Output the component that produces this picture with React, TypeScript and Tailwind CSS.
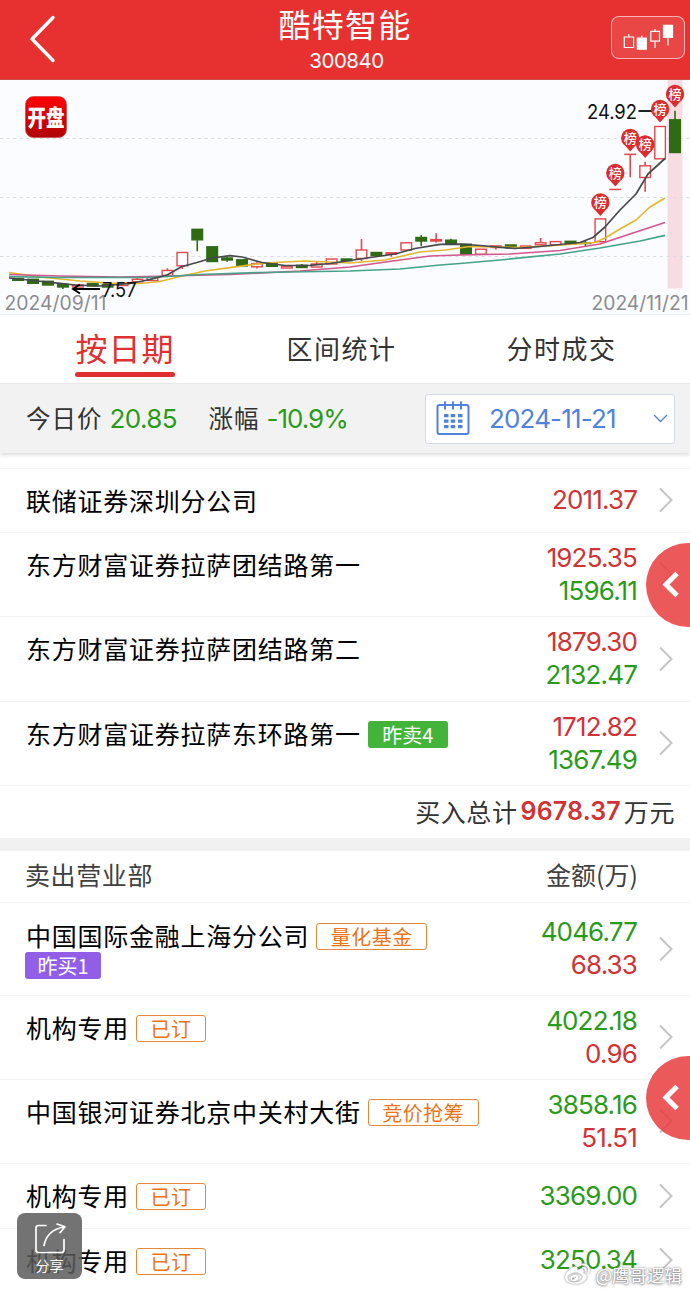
import { FaWeibo } from "react-icons/fa";

const NUM = "font-['Inter','Noto_Sans_CJK_SC',sans-serif]";

type Candle = {
  // body top / bottom
  t: number;
  b: number;
  up: boolean;
  // wick top / bottom
  wt?: number;
  wb?: number;
};

const candles: Candle[] = [
  { t: 278.5, b: 280.3, up: false },
  { t: 279.3, b: 283.3, up: false },
  { t: 281.3, b: 285, up: false },
  { t: 284.3, b: 287, up: false, wb: 289 },
  { t: 285, b: 287, up: true },
  { t: 283.5, b: 286, up: false },
  { t: 284.5, b: 287, up: false },
  { t: 283, b: 285.5, up: true },
  { t: 279.3, b: 281.8, up: true, wt: 277.5 },
  { t: 277.5, b: 280.5, up: true, wt: 276 },
  { t: 270.5, b: 275.5, up: true, wt: 268.3, wb: 277.3 },
  { t: 252.5, b: 265.8, up: true, wb: 269 },
  { t: 229.3, b: 239.8, up: false, wb: 251.3 },
  { t: 246.8, b: 261.5, up: false },
  { t: 258, b: 260, up: false, wt: 256.7, wb: 261.7 },
  { t: 259.8, b: 266, up: false, wb: 267 },
  { t: 263.6, b: 266.8, up: true, wt: 262, wb: 268.5 },
  { t: 263, b: 266.3, up: false, wt: 262 },
  { t: 266.2, b: 268, up: true },
  { t: 265.3, b: 267.5, up: false, wt: 264 },
  { t: 264, b: 267, up: true, wt: 261.3 },
  { t: 259, b: 264, up: true },
  { t: 259, b: 260.7, up: false },
  { t: 250, b: 258.5, up: true, wt: 239, wb: 261.3 },
  { t: 252.5, b: 255.5, up: false },
  { t: 252.8, b: 254.2, up: true, wb: 256.7 },
  { t: 242.8, b: 250, up: true },
  { t: 237.5, b: 241, up: false, wt: 235, wb: 246 },
  { t: 239.6, b: 241, up: true, wt: 233.3, wb: 242.7 },
  { t: 240.2, b: 243.5, up: false, wt: 238.7 },
  { t: 244.2, b: 254.2, up: false },
  { t: 249.2, b: 254.2, up: true },
  { t: 246, b: 247.5, up: true, wb: 249.5 },
  { t: 245, b: 247.7, up: false },
  { t: 246, b: 248.3, up: true },
  { t: 242.8, b: 244.8, up: true, wt: 238 },
  { t: 241.6, b: 244.8, up: true },
  { t: 241.3, b: 244, up: false },
  { t: 243, b: 243.5, up: false, wt: 240.7, wb: 247 },
  { t: 218.9, b: 241.7, up: true },
  { t: 189.4, b: 189.5, up: true },
  { t: 154.3, b: 154.4, up: true, wb: 177.3 },
  { t: 165.8, b: 177.5, up: true, wt: 161.7, wb: 191.7 },
  { t: 126.5, b: 158.8, up: true },
  { t: 119.8, b: 152.5, up: false, wt: 110.7 },
];

const candleX = (i: number) => 18.1 + i * 14.93;

const pins = [
  { i: 39, y: 203 },
  { i: 40, y: 173.5 },
  { i: 41, y: 138.5 },
  { i: 42, y: 145 },
  { i: 43, y: 109.5 },
  { i: 44, y: 94.5 },
];

const averages = [
  {
    color: "#e3b72f",
    points: [9, 272.5, 40, 277, 80, 281, 110, 283.2, 140, 283.5, 160, 281.5, 182, 276, 205, 271, 230, 267.7, 265, 263, 305, 261, 350, 263, 385, 260, 420, 252, 445, 250, 470, 246.5, 520, 247.5, 570, 244.5, 595, 242.5, 605, 238, 620, 229, 636, 220, 650, 207, 665, 198],
  },
  {
    color: "#d2578f",
    points: [9, 274.5, 60, 276, 120, 277, 170, 276, 230, 274.5, 300, 271, 350, 267, 400, 260, 430, 256, 460, 255, 510, 254, 560, 250.5, 600, 244, 630, 234, 665, 222.5],
  },
  {
    color: "#45a389",
    points: [9, 276.7, 60, 277.5, 150, 277.5, 200, 274.5, 260, 272.5, 350, 271, 400, 269, 440, 265, 460, 263.5, 500, 260, 560, 254, 600, 248, 640, 241, 665, 235.3],
  },
  {
    color: "#45484c",
    points: [9, 278, 33, 280.5, 60, 283.3, 75, 285, 100, 286, 130, 283.5, 150, 279.5, 167, 275, 182, 266.5, 197, 262.5, 212, 258, 230, 255.7, 242, 257, 262, 262.5, 285, 265.5, 310, 265.3, 330, 263.5, 360, 259, 395, 254, 415, 248.5, 440, 244.3, 460, 244.2, 480, 245.5, 515, 248.5, 540, 246.5, 560, 244.5, 580, 242.5, 593, 237.5, 605, 227, 620, 210, 636, 194, 648, 174, 665, 158.5],
  },
];

function KLineChart() {
  return (
    <svg className="block h-[235px] w-full bg-[#fbfcff]" viewBox="0 80 690 235">
      <rect x="667.5" y="80" width="15" height="208.5" fill="#f7dde3" />
      {[138.5, 197.5, 256.5].map((y) => (
        <line key={y} x1="0" x2="690" y1={y} y2={y} stroke="#d9dce4" strokeDasharray="3 3.6" />
      ))}
      <line x1="0" x2="690" y1="314.5" y2="314.5" stroke="#eceef2" />

      <text x="4.5" y="310" fontSize="19.5" fill="#8b8c8f" textLength="102" lengthAdjust="spacingAndGlyphs">
        2024/09/11
      </text>
      <text x="591.5" y="310" fontSize="19.5" fill="#8b8c8f" textLength="97" lengthAdjust="spacingAndGlyphs">
        2024/11/21
      </text>

      {candles.map((c, i) => {
        const x = candleX(i);
        const color = c.up ? "#e2474b" : "#2f6a14";
        return (
          <g key={i} stroke={color} strokeWidth="1.4">
            {c.wt !== undefined && <line x1={x} x2={x} y1={c.wt} y2={c.t} strokeWidth="1.6" />}
            {c.wb !== undefined && <line x1={x} x2={x} y1={c.b} y2={c.wb} strokeWidth="1.6" />}
            <rect x={x - 5.3} y={c.t} width="10.6" height={c.b - c.t} fill={c.up ? "#fff" : color} />
          </g>
        );
      })}

      {averages.map((a) => (
        <polyline key={a.color} points={a.points.join(" ")} fill="none" stroke={a.color} strokeWidth="1.7" strokeLinejoin="round" />
      ))}

      {/* low / high labels */}
      <path d="M100 289H73M80 284.5L73 289l7 4.5" fill="none" stroke="#000" strokeWidth="1.9" />
      <text x="102" y="297" fontSize="19.5" fill="#111" textLength="34.5" lengthAdjust="spacingAndGlyphs">
        7.57
      </text>
      <text x="587" y="118.5" fontSize="20" fill="#111" textLength="50" lengthAdjust="spacingAndGlyphs">
        24.92
      </text>
      <path d="M638.5 111h14" stroke="#222" strokeWidth="2" />

      {pins.map((p) => {
        const x = candleX(p.i);
        return (
          <g key={p.i}>
            <path d={`M${x - 7} ${p.y + 5}L${x} ${p.y + 13}L${x + 7} ${p.y + 5}Z`} fill="#dd2c2f" />
            <circle cx={x} cy={p.y - 0.5} r="9.2" fill="#dd2c2f" />
            <text x={x} y={p.y + 4.2} textAnchor="middle" fontSize="13" fontWeight="500" fill="#fff">
              榜
            </text>
          </g>
        );
      })}

      <defs>
        <linearGradient id="badge" x1="0" y1="0" x2="0" y2="1">
          <stop offset="0" stopColor="#fd0303" />
          <stop offset="1" stopColor="#ae0507" />
        </linearGradient>
      </defs>
      <rect x="25.5" y="96.5" width="41" height="41" rx="8" fill="url(#badge)" stroke="#cf4a4a" strokeWidth="0.8" />
      <text x="27.5" y="125.5" fontSize="23" fontWeight="900" fill="#fff" textLength="37" lengthAdjust="spacingAndGlyphs" className="font-['Noto_Sans_CJK_SC',sans-serif]">
        开盘
      </text>
    </svg>
  );
}

function Header() {
  return (
    <header className="grid h-20 grid-cols-[1fr_auto_1fr] items-center border-b border-[#c94d4d] bg-[#e73131] text-white">
      <svg className="ml-[28px] mt-[-4px] h-[50px] w-[30px]" viewBox="0 0 30 50" fill="none" stroke="#fff" strokeWidth="3.4" strokeLinecap="round" strokeLinejoin="round">
        <path d="M25 4.5L4 26l21 21.5" />
      </svg>
      <div className="self-start text-center">
        <h1 className="mb-[2px] font-['Noto_Sans_CJK_SC',sans-serif] text-[32px] leading-[46px] font-normal tracking-[1.2px]">酷特智能</h1>
        <p className="pl-[3px] text-[20.5px] leading-[26px] tracking-[-0.5px]">300840</p>
      </div>
      <div className="mt-[-4px] mr-[5px] flex h-[43px] w-[74px] items-center justify-center justify-self-end rounded-lg border border-white/60 bg-white/10">
        <svg className="h-[41px] w-[72px] shrink-0" viewBox="612 17 72 41" fill="none" stroke="#fff" strokeWidth="1.2">
          <path d="M628.8 34v2.5M624.3 37h9.3v10.5h-9.3z" />
          <path d="M641.8 35.5V38M637.3 38.2h9v11h-9z" fill="#fff" />
          <path d="M655 29v2.5M650.8 31.3h8.7v9.8h-8.7zM655 41v7" />
          <path d="M663.5 25.3h9v12h-9zM668 37v8.5" fill="#fff" />
        </svg>
      </div>
    </header>
  );
}

function Tabs() {
  return (
    <nav className="grid h-[68px] grid-cols-[250px_182px_258px] bg-white text-center font-['Noto_Sans_CJK_SC',sans-serif]">
      <div className="flex flex-col items-center">
        <span className="mt-[9px] h-12 text-[32px] leading-[46px] tracking-[1px] text-[#dd3233]">按日期</span>
        <span className="h-[5px] w-[100px] rounded-full bg-[#e02f30]" />
      </div>
      <span className="pt-[13px] pl-px text-[26px] leading-10 tracking-[1.5px] text-[#333]">区间统计</span>
      <span className="pt-[13px] pl-px text-[26px] leading-10 tracking-[1.5px] text-[#333]">分时成交</span>
    </nav>
  );
}

function FilterBar() {
  return (
    <div className="flex h-[70px] items-center border-t border-[#e8e8e8] bg-[#f2f2f2] pr-[15px] pl-[26px] font-['Noto_Sans_CJK_SC',sans-serif] text-[24.5px] tracking-[1px] text-[#333] shadow-[0_2px_4px_rgba(0,0,0,0.14)]">
      <span>今日价</span>
      <span className={`${NUM} ml-[7px] w-[68px] text-[26px] tracking-[-0.6px] text-[#2a9a1b]`}>20.85</span>
      <span className="ml-[31px]">涨幅</span>
      <span className={`${NUM} ml-[7px] text-[26px] tracking-[-1px] text-[#2a9a1b]`}>-10.9%</span>
      <button className="ml-auto flex h-[50px] w-[250px] items-center rounded-[3px] border border-[#d3dbe6] bg-white pl-[10px] text-[#5082dc]">
        <svg className="h-9 w-[34px]" viewBox="0 0 34 36" fill="none" stroke="currentColor" strokeWidth="2">
          <rect x="1.5" y="4" width="31" height="29" rx="2" />
          <path d="M9 0.500v8M17 0.500v8M25 0.500v8" />
          <path d="M8 14.700h4.500M14.700 14.700h4.500M22 14.700h4.500M8 20.200h4.500M14.700 20.200h4.500M22 20.200h4.500M8 25.700h4.500M14.700 25.700h4.500M22 25.700h4.500" strokeWidth="3.2" />
        </svg>
        <span className={`${NUM} ml-[19px] text-[26px] tracking-[-0.85px]`}>2024-11-21</span>
        <svg className="mr-[6px] ml-auto h-[9px] w-[15px]" viewBox="0 0 15 9" fill="none" stroke="currentColor" strokeWidth="1.3">
          <path d="M1 1l6.5 6.5L14 1" />
        </svg>
      </button>
    </div>
  );
}

type Tag = { text: string; className: string };

const orange = "border-[1.5px] border-[#e5883a] text-[#ec7318] tracking-[0.5px]";

const tagStyles = {
  sold: "bg-[#42b43a] text-white w-20",
  bought: "bg-[#925ee8] text-white w-[76px] ml-[-1px] mt-px",
  short: `${orange} w-[70px]`,
  long: `${orange} w-[111px]`,
};

type Row = {
  name: string;
  tags?: Tag[];
  subTag?: Tag;
  values: { text: string; up: boolean }[];
  height: string;
};

const buyRows: Row[] = [
  { name: "联储证券深圳分公司", values: [{ text: "2011.37", up: true }], height: "h-16" },
  {
    name: "东方财富证券拉萨团结路第一",
    values: [{ text: "1925.35", up: true }, { text: "1596.11", up: false }],
    height: "h-[84px]",
  },
  {
    name: "东方财富证券拉萨团结路第二",
    values: [{ text: "1879.30", up: true }, { text: "2132.47", up: false }],
    height: "h-[85px]",
  },
  {
    name: "东方财富证券拉萨东环路第一",
    tags: [{ text: "昨卖4", className: tagStyles.sold }],
    values: [{ text: "1712.82", up: true }, { text: "1367.49", up: false }],
    height: "h-[84px]",
  },
];

const sellRows: Row[] = [
  {
    name: "中国国际金融上海分公司",
    tags: [{ text: "量化基金", className: tagStyles.long }],
    subTag: { text: "昨买1", className: tagStyles.bought },
    values: [{ text: "4046.77", up: false }, { text: "68.33", up: true }],
    height: "h-[93px]",
  },
  {
    name: "机构专用",
    tags: [{ text: "已订", className: tagStyles.short }],
    values: [{ text: "4022.18", up: false }, { text: "0.96", up: true }],
    height: "h-[84px]",
  },
  {
    name: "中国银河证券北京中关村大街",
    tags: [{ text: "竞价抢筹", className: tagStyles.long }],
    values: [{ text: "3858.16", up: false }, { text: "51.51", up: true }],
    height: "h-[84px]",
  },
  {
    name: "机构专用",
    tags: [{ text: "已订", className: tagStyles.short }],
    values: [{ text: "3369.00", up: false }],
    height: "h-[65px]",
  },
  {
    name: "机构专用",
    tags: [{ text: "已订", className: tagStyles.short }],
    values: [{ text: "3250.34", up: false }],
    height: "h-16",
  },
];

function TagBadge({ tag }: { tag: Tag }) {
  return (
    <span className={`inline-flex h-[27px] items-center justify-center rounded-[3px] text-[20px] leading-none whitespace-nowrap ${tag.className}`}>
      {tag.text}
    </span>
  );
}

function BrokerRow({ row }: { row: Row }) {
  return (
    <div className={`flex border-t border-[#f3f3f3] pl-[26px] ${row.height}`}>
      <div className={`flex-1 font-['Noto_Sans_CJK_SC',sans-serif] ${row.subTag ? "pt-[19px]" : "pt-[18px]"}`}>
        <div className="flex h-[29px] items-center gap-[7px]">
          <span className="-mt-0.5 text-[25px] leading-[29px] tracking-[0.75px] whitespace-nowrap text-black">{row.name}</span>
          {row.tags?.map((tag) => <TagBadge key={tag.text} tag={tag} />)}
        </div>
        {row.subTag && <TagBadge tag={row.subTag} />}
      </div>
      <div className={`${NUM} flex flex-col justify-center pb-[2px] text-right text-[26px] leading-[33px] tracking-[-0.85px]`}>
        {row.values.map((v) => (
          <span key={v.text} className={v.up ? "text-[#cf3335]" : "text-[#2a9a1b]"}>
            {v.text}
          </span>
        ))}
      </div>
      <svg className="mr-[17px] mb-px ml-[22px] h-[26px] w-[14px] self-center" viewBox="0 0 14 26" fill="none" stroke="#c4c4c4" strokeWidth="2">
        <path d="M1 1.5L12.5 13 1 24.5" />
      </svg>
    </div>
  );
}

function SideHandle({ className }: { className: string }) {
  return (
    <button className={`absolute right-0 h-[84px] w-11 overflow-hidden rounded-l-full bg-[#e83c3d]/85 ${className}`}>
      <svg className="ml-4 h-[28px] w-[18px]" viewBox="0 0 18 28" fill="none" stroke="#fff" strokeWidth="5">
        <path d="M15 2.5L4 13.5 15 24.5" />
      </svg>
    </button>
  );
}

export default function App() {
  return (
    <div className="relative h-[1292px] w-[690px] overflow-hidden bg-white font-['Inter','Noto_Sans_CJK_SC',sans-serif]">
      <Header />
      <KLineChart />
      <Tabs />
      <FilterBar />

      <section className="mt-[15px]">
        {buyRows.map((row) => <BrokerRow key={row.name} row={row} />)}
        <div className="flex h-[53px] items-center justify-end border-t border-[#f3f3f3] pr-[15px] pb-px font-['Noto_Sans_CJK_SC',sans-serif] text-[25px] tracking-[0.6px] text-[#333]">
          <span>买入总计</span>
          <span className={`${NUM} mt-px mr-[3px] ml-[3px] font-semibold tracking-[0.15px] text-[#cf3335]`}>9678.37</span>
          <span>万元</span>
        </div>
      </section>

      <div className="h-[13px] bg-[#f1f1f1]" />

      <section>
        <div className="flex h-[51px] items-center justify-between pr-[52px] pb-[3px] pl-[25px] font-['Noto_Sans_CJK_SC',sans-serif] text-[25px] tracking-[0.6px] text-[#404040]">
          <span>卖出营业部</span>
          <span className="tracking-normal">金额(万)</span>
        </div>
        {sellRows.map((row, i) => <BrokerRow key={i} row={row} />)}
      </section>

      <SideHandle className="top-[543px]" />
      <SideHandle className="top-[1056px]" />

      {/* share button */}
      <button className="absolute top-[1213px] left-[17px] flex h-[66px] w-[65px] flex-col items-center rounded-lg bg-[#5a5a5a]/85 pt-[7px] text-white">
        <svg className="h-[35px] w-[34px]" viewBox="0 0 34 34" fill="none" stroke="#fff" strokeWidth="1.7" strokeLinecap="round" strokeLinejoin="round">
          <path d="M13 5H5.500q-2.500 0-2.500 2.500v22q0 2.500 2.500 2.500h23q2.500 0 2.500-2.500V19" />
          <path d="M11 25C13 15 19 8.500 31 6.500M24 3.500l8 2.700-5 6" />
        </svg>
        <span className="font-['Noto_Sans_CJK_SC',sans-serif] text-[14px] leading-5">分享</span>
      </button>

      <div className="absolute right-[8px] bottom-[5px] flex items-center gap-[5px] font-['Noto_Sans_CJK_SC',sans-serif] text-[17.500px] leading-6 text-white [text-shadow:0_0_2px_#777,0_1px_3px_#888]">
        <FaWeibo className="size-[25px] drop-shadow-[0_0_1px_#777]" />
        <span className="whitespace-nowrap">@鹰哥逻辑</span>
      </div>
    </div>
  );
}
